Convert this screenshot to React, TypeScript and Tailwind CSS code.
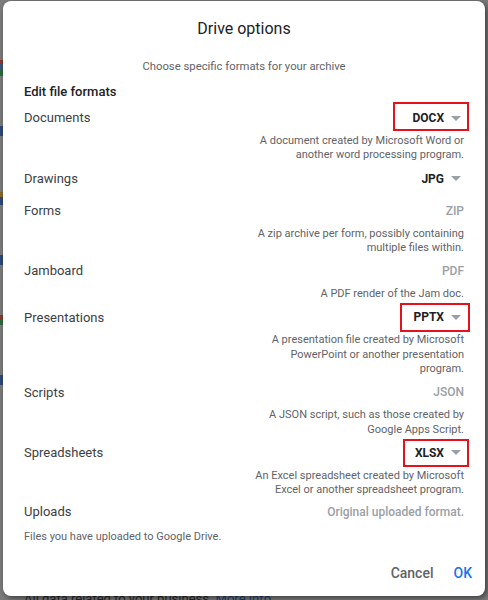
import React from 'react'

type Format = {
  label: string
  value: string
  active: boolean
  lines: string[]
  // red annotation box drawn over the select
  mark?: string
}

const formats: Format[] = [
  {
    label: 'Documents',
    value: 'DOCX',
    active: true,
    lines: ['A document created by Microsoft Word or', 'another word processing program.'],
    mark: 'top-0 -right-[5px] w-[76px] h-[29px]',
  },
  { label: 'Drawings', value: 'JPG', active: true, lines: [] },
  {
    label: 'Forms',
    value: 'ZIP',
    active: false,
    lines: ['A zip archive per form, possibly containing', 'multiple files within.'],
  },
  { label: 'Jamboard', value: 'PDF', active: false, lines: ['A PDF render of the Jam doc.'] },
  {
    label: 'Presentations',
    value: 'PPTX',
    active: true,
    lines: ['A presentation file created by Microsoft', 'PowerPoint or another presentation', 'program.'],
    mark: 'top-[2px] -right-[6px] w-[70px] h-[29px]',
  },
  {
    label: 'Scripts',
    value: 'JSON',
    active: false,
    lines: ['A JSON script, such as those created by', 'Google Apps Script.'],
  },
  {
    label: 'Spreadsheets',
    value: 'XLSX',
    active: true,
    lines: ['An Excel spreadsheet created by Microsoft', 'Excel or another spreadsheet program.'],
    mark: 'top-[2px] -right-[5px] w-[66px] h-[28px]',
  },
]

function Arrow() {
  return (
    <svg width="10" height="5" viewBox="0 0 10 5" className="ml-[7px] mr-[3px]">
      <polygon points="0,0 10,0 5,5" fill="#9aa0a6" />
    </svg>
  )
}

export default function App() {
  return (
    <div className="h-[600px] w-[488px] overflow-hidden bg-[#7d7d7d] font-['Roboto',sans-serif]">
      <div className="flex h-[597px]">
        {/* page behind the overlay, left edge */}
        <div className="w-[3px] flex flex-col">
          <div className="h-[60px]" />
          <div className="h-[4px] bg-[#8a3a32]" />
          <div className="h-[6px] bg-[#39587f]" />
          <div className="h-[6px] bg-[#2f6b3e]" />
          <div className="h-[50px]" />
          <div className="h-[10px] bg-[#2d4a7a]" />
          <div className="h-[56px]" />
          <div className="h-[5px] bg-[#8a6a2a]" />
          <div className="h-[8px] bg-[#2d4a7a]" />
          <div className="h-[50px]" />
          <div className="h-[10px] bg-[#2d4a7a]" />
          <div className="h-[50px]" />
          <div className="h-[5px] bg-[#8a3a32]" />
          <div className="h-[5px] bg-[#2f6b3e]" />
          <div className="h-[50px]" />
          <div className="h-[10px] bg-[#2d4a7a]" />
        </div>

        <div className="relative z-10 mt-[1px] w-[482px] h-[595px] rounded-[8px] bg-white shadow-[2px_2px_6px_rgba(0,0,0,0.55)] px-[21px] pt-[16px] pb-[13px] flex flex-col">
          <h1 className="text-center text-[16px] leading-[24px] text-[#202124]">Drive options</h1>
          <p className="mt-[18px] text-center text-[11.3px] leading-[16px] text-[#5f6368]">
            Choose specific formats for your archive
          </p>
          <h2 className="mt-[9px] text-[13px] leading-[16px] font-medium text-[#202124]">Edit file formats</h2>

          <div className="mt-[2px] flex flex-col">
            {formats.map((f) => (
              <div key={f.label}>
                <div className="relative h-8 flex items-center justify-between">
                  <span className="text-[13px] text-[#3c4043]">{f.label}</span>
                  {f.active ? (
                    <span className="flex items-center text-[12px] font-bold text-[#202124]">
                      {f.value}
                      <Arrow />
                    </span>
                  ) : (
                    <span className="text-[12px] font-medium text-[#9aa0a6]">{f.value}</span>
                  )}
                  {f.mark && <span className={`absolute border-2 border-[#e3121c] ${f.mark}`} />}
                </div>
                {f.lines.length > 0 && (
                  <div className="text-right text-[11px] leading-[14.3px] text-[#5f6368]">
                    {f.lines.map((l) => (
                      <div key={l}>{l}</div>
                    ))}
                  </div>
                )}
              </div>
            ))}

            <div className="h-8 -mt-[2px] flex items-center justify-between">
              <span className="text-[13px] text-[#3c4043]">Uploads</span>
              <span className="text-[12px] font-medium text-[#9aa0a6]">Original uploaded format.</span>
            </div>
            <div className="mt-[2px] text-[11px] leading-[14.5px] text-[#5f6368]">Files you have uploaded to Google Drive.</div>
          </div>

          <div className="mt-auto -mr-[8px] flex justify-end items-center gap-[20px]">
            <button className="text-[14px] leading-[20px] font-medium text-[#5f6368]">Cancel</button>
            <button className="text-[14px] leading-[20px] font-medium text-[#1a73e8]">OK</button>
          </div>
        </div>
        <div className="flex-1" />
      </div>

      <div className="-mt-[6px] pl-[24px] text-[13px] leading-[16px] text-[#2a2a2a]">
        All data related to your business. <span className="text-[#1e3f7a]">More info</span>
      </div>
    </div>
  )
}
